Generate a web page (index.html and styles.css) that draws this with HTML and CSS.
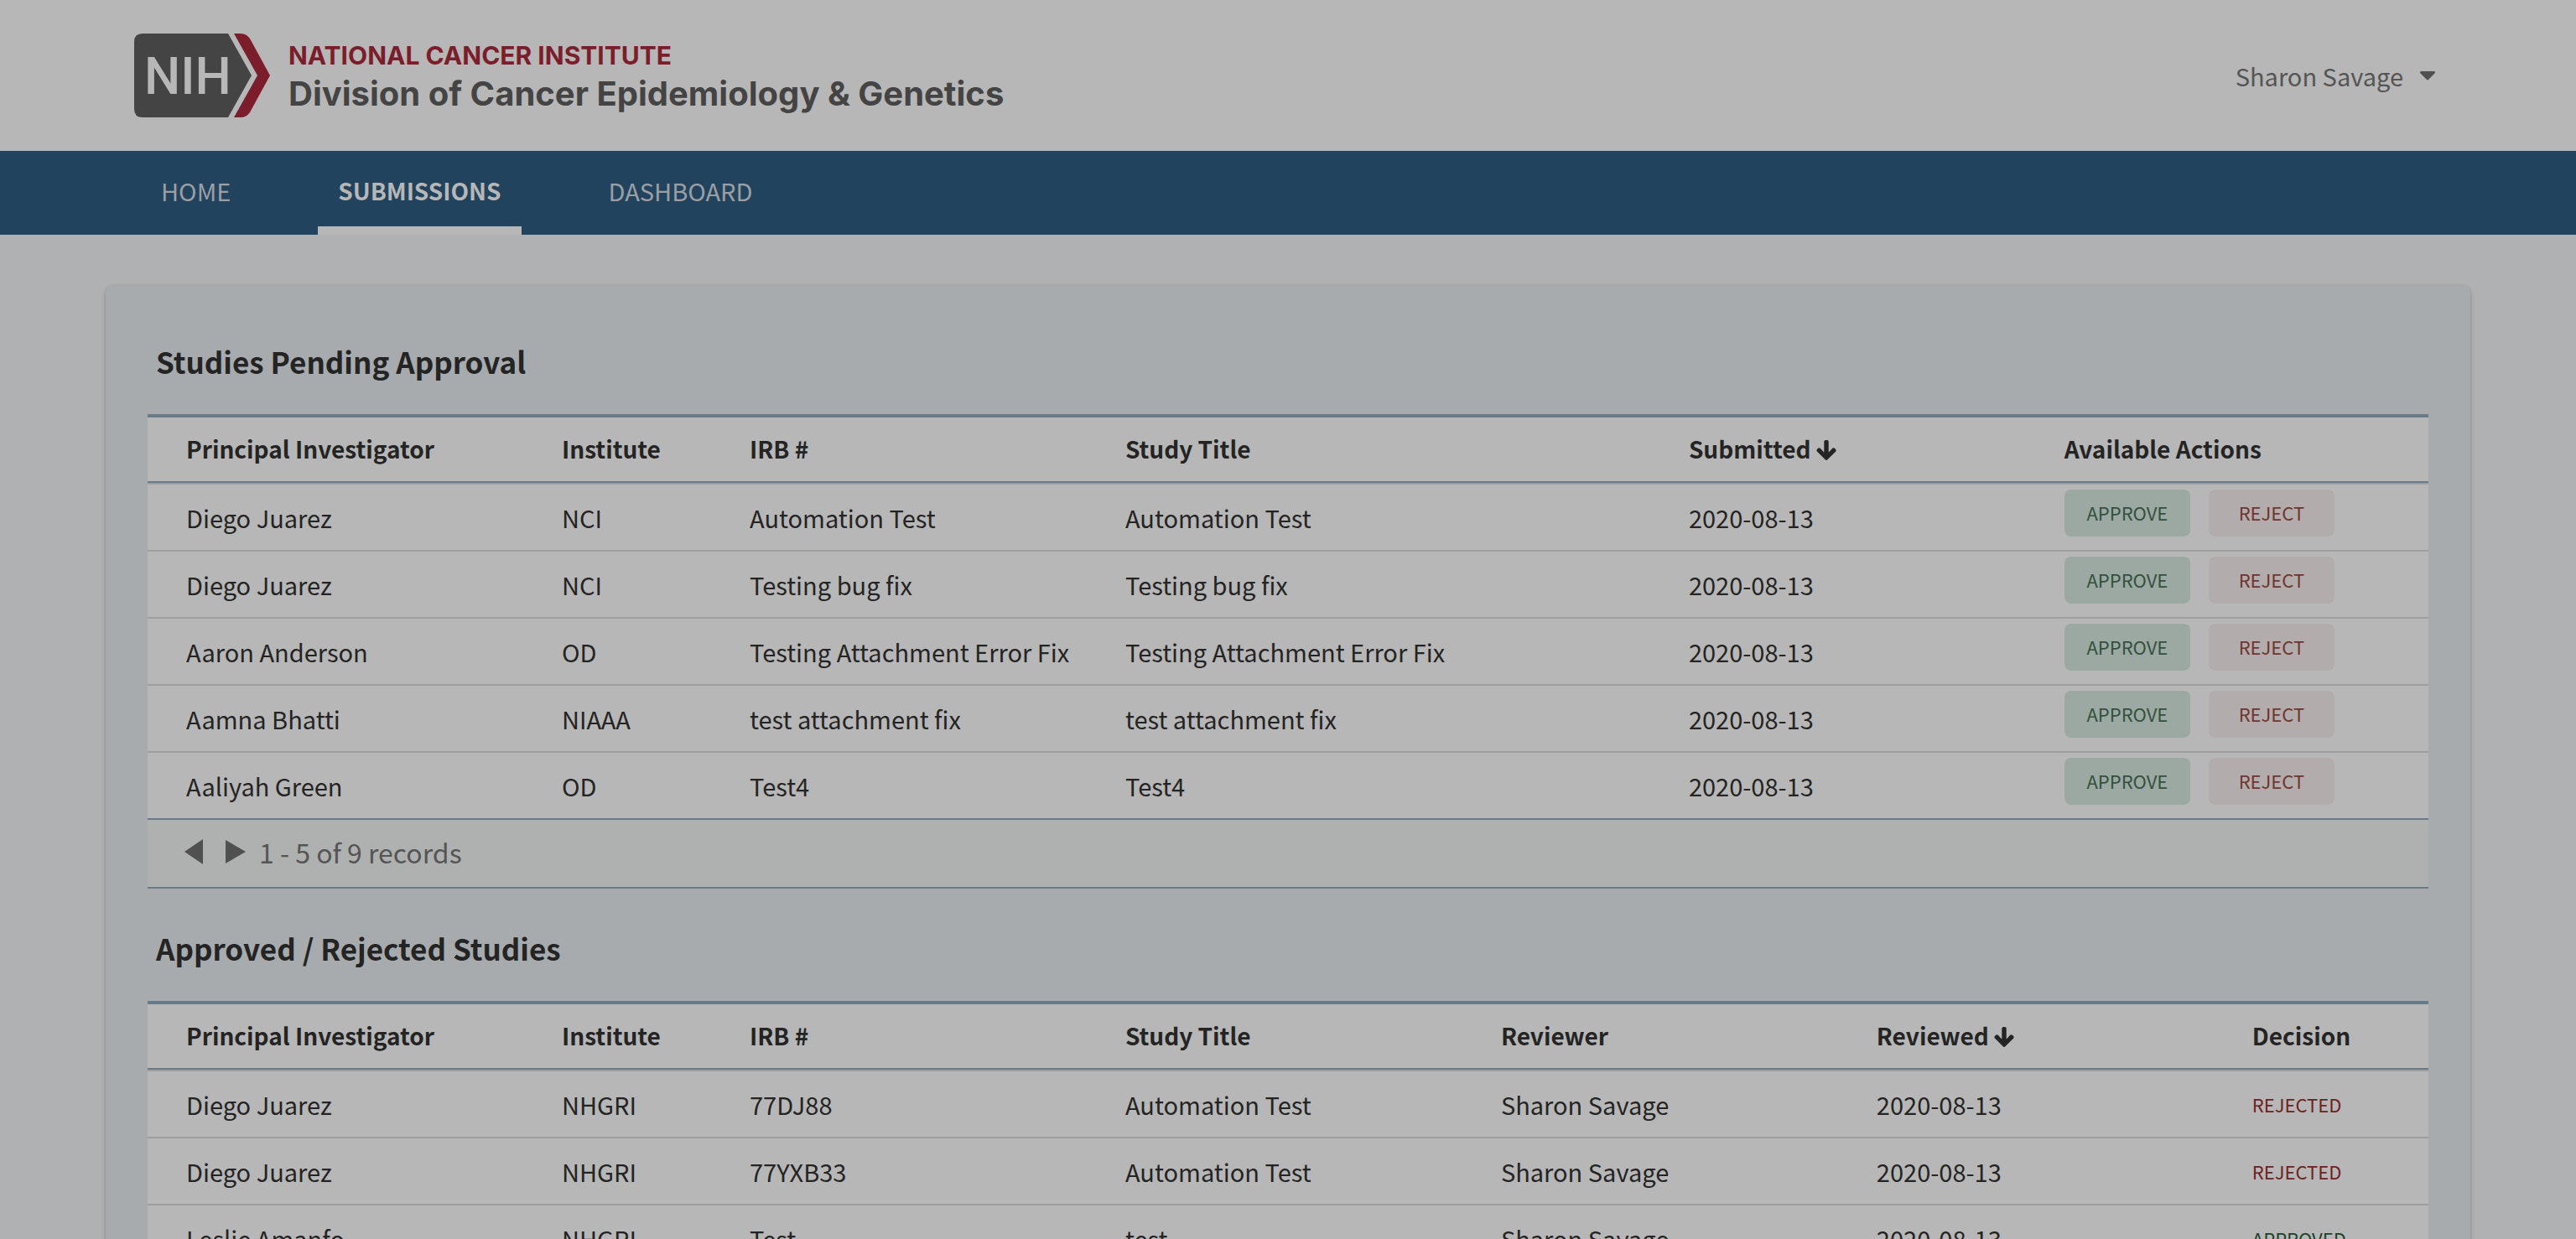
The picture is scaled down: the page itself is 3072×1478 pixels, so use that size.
FILE: index.html
```html
<!DOCTYPE html>
<html lang="en">
<head>
<meta charset="utf-8">
<title>Submissions</title>
<link rel="stylesheet" href="styles.css">
</head>
<body>
<svg class="sprite" aria-hidden="true">
  <symbol id="arrow-down" viewBox="-16 16 480 480"><path stroke="currentColor" stroke-width="28" stroke-linejoin="round" d="M413.100 222.500l22.200 22.200c9.400 9.400 9.400 24.600 0 33.900L241 473c-9.400 9.400-24.600 9.400-33.900 0L12.700 278.600c-9.400-9.400-9.400-24.600 0-33.900l22.200-22.200c9.500-9.500 25-9.300 34.300.4L184 343.400V56c0-13.300 10.700-24 24-24h32c13.300 0 24 10.700 24 24v287.400l114.800-120.500c9.300-9.800 24.800-10 34.300-.4z"/></symbol>
</svg>
<header class="header">
  <a class="brand" href="#">
    <svg class="brand-mark" viewBox="0 0 162 100" role="img" aria-label="NIH">
      <path class="mark-body" d="M10 0H112L140 50L112 100H10Q0 100 0 90V10Q0 0 10 0Z"/>
      <path class="mark-chevron" d="M119 0H127Q134 0 138 6L162 50L138 94Q134 100 127 100H119L147 50Z"/>
      <text class="mark-text" x="12" y="72">NIH</text>
    </svg>
    <span class="brand-text">
      <span class="brand-org">NATIONAL CANCER INSTITUTE</span>
      <span class="brand-division">Division of Cancer Epidemiology &amp; Genetics</span>
    </span>
  </a>
  <button class="user" type="button">Sharon Savage
    <svg class="caret" viewBox="0 0 18 11" aria-hidden="true"><path d="M1 0H17Q19 1 17 3L10 10Q9 11 8 10L1 3Q-1 1 1 0Z"/></svg>
  </button>
</header>
<nav class="nav">
  <a class="nav-link" href="#">HOME</a>
  <a class="nav-link nav-link-active" href="#" aria-current="page">SUBMISSIONS</a>
  <a class="nav-link" href="#">DASHBOARD</a>
</nav>
<main class="card">
  <section class="section">
    <h2 class="section-title">Studies Pending Approval</h2>
    <table class="table">
      <colgroup><col class="col-2"><col class="col-1"><col class="col-2"><col class="col-3"><col class="col-2"><col></colgroup>
      <thead>
        <tr><th>Principal Investigator</th><th>Institute</th><th>IRB #</th><th>Study Title</th><th>Submitted <svg class="sort"><use href="#arrow-down"/></svg></th><th>Available Actions</th></tr>
      </thead>
      <tbody>
        <tr><td>Diego Juarez</td><td>NCI</td><td>Automation Test</td><td>Automation Test</td><td>2020-08-13</td><td class="actions"><div class="action-group"><button class="btn btn-approve" type="button">APPROVE</button><button class="btn btn-reject" type="button">REJECT</button></div></td></tr>
        <tr><td>Diego Juarez</td><td>NCI</td><td>Testing bug fix</td><td>Testing bug fix</td><td>2020-08-13</td><td class="actions"><div class="action-group"><button class="btn btn-approve" type="button">APPROVE</button><button class="btn btn-reject" type="button">REJECT</button></div></td></tr>
        <tr><td>Aaron Anderson</td><td>OD</td><td>Testing Attachment Error Fix</td><td>Testing Attachment Error Fix</td><td>2020-08-13</td><td class="actions"><div class="action-group"><button class="btn btn-approve" type="button">APPROVE</button><button class="btn btn-reject" type="button">REJECT</button></div></td></tr>
        <tr><td>Aamna Bhatti</td><td>NIAAA</td><td>test attachment fix</td><td>test attachment fix</td><td>2020-08-13</td><td class="actions"><div class="action-group"><button class="btn btn-approve" type="button">APPROVE</button><button class="btn btn-reject" type="button">REJECT</button></div></td></tr>
        <tr><td>Aaliyah Green</td><td>OD</td><td>Test4</td><td>Test4</td><td>2020-08-13</td><td class="actions"><div class="action-group"><button class="btn btn-approve" type="button">APPROVE</button><button class="btn btn-reject" type="button">REJECT</button></div></td></tr>
      </tbody>
    </table>
    <div class="pager">
      <button class="pager-btn" type="button" aria-label="Previous page"><svg class="pager-icon" viewBox="0 0 24 30"><path d="M23 0V30L1 15Z"/></svg></button>
      <button class="pager-btn" type="button" aria-label="Next page"><svg class="pager-icon" viewBox="0 0 24 30"><path d="M0 1V29L24 15Z"/></svg></button>
      <span class="pager-text">1 - 5 of 9 records</span>
    </div>
  </section>
  <section class="section">
    <h2 class="section-title">Approved / Rejected Studies</h2>
    <table class="table">
      <colgroup><col class="col-2"><col class="col-1"><col class="col-2"><col class="col-2"><col class="col-2"><col class="col-2"><col></colgroup>
      <thead>
        <tr><th>Principal Investigator</th><th>Institute</th><th>IRB #</th><th>Study Title</th><th>Reviewer</th><th>Reviewed <svg class="sort"><use href="#arrow-down"/></svg></th><th>Decision</th></tr>
      </thead>
      <tbody>
        <tr><td>Diego Juarez</td><td>NHGRI</td><td>77DJ88</td><td>Automation Test</td><td>Sharon Savage</td><td>2020-08-13</td><td class="decision rejected">REJECTED</td></tr>
        <tr><td>Diego Juarez</td><td>NHGRI</td><td>77YXB33</td><td>Automation Test</td><td>Sharon Savage</td><td>2020-08-13</td><td class="decision rejected">REJECTED</td></tr>
        <tr><td>Leslie Amanfo</td><td>NHGRI</td><td>Test</td><td>test</td><td>Sharon Savage</td><td>2020-08-13</td><td class="decision approved">APPROVED</td></tr>
      </tbody>
    </table>
  </section>
</main>
</body>
</html>
```
FILE: styles.css
```css
* { box-sizing: border-box; }

body {
  margin: 0;
  background: #b0b1b3;
  color: #242424;
  font-family: "Noto Sans CJK JP", "Noto Sans", sans-serif;
  font-size: 29px;
  line-height: 40px;
}

a { color: inherit; text-decoration: none; }

button {
  border: 0;
  padding: 0;
  background: none;
  color: inherit;
  font: inherit;
}

.sprite { display: none; }

.header {
  display: flex;
  justify-content: space-between;
  align-items: center;
  height: 180px;
  padding: 0 168px 0 160px;
  background: #b7b7b7;
}

.brand { display: flex; align-items: center; gap: 22px; }
.brand-mark { width: 162px; height: 100px; }
.mark-body { fill: #444; }
.mark-chevron { fill: #7c1d2c; }
.mark-text { fill: #b7b7b7; font: 500 61px Roboto, sans-serif; }

.brand-text {
  display: flex;
  flex-direction: column;
  font-family: Inter, sans-serif;
  font-weight: 700;
  white-space: nowrap;
}
.brand-org { color: #7c1d2c; font-size: 30px; line-height: 44px; }
.brand-division { color: #444; font-size: 40px; line-height: 48px; }

.user {
  display: flex;
  align-items: center;
  gap: 20px;
  color: #555;
}
.caret { width: 18px; height: 11px; fill: #505050; }

.nav {
  display: flex;
  gap: 80px;
  height: 100px;
  padding: 0 168px;
  background: #22435e;
}
.nav-link {
  display: flex;
  align-items: center;
  padding: 4px 24px 0;
  border-bottom: 10px solid transparent;
  color: #9b9fa4;
}
.nav-link-active {
  border-color: #b7b7b7;
  color: #b7b7b7;
  font-size: 28px;
  font-weight: 600;
}

.card {
  margin: 60px 126px;
  padding: 50px;
  border-radius: 10px;
  background: #a7abae;
  box-shadow: 0 2px 4px rgba(0, 0, 0, 0.3);
}

.section + .section { margin-top: 30px; }
.section-title {
  margin: 0;
  padding: 12px 10px 34px;
  font-size: 35px;
  font-weight: 600;
  line-height: 58px;
}

.table {
  width: 100%;
  border-top: 4px solid #6a7a86;
  border-spacing: 0;
  table-layout: fixed;
  background: #b7b7b7;
}
.col-1 { width: 8.235%; }
.col-2 { width: 16.47%; }
.col-3 { width: 24.705%; }

.table th,
.table td {
  height: 80px;
  padding: 0 0 0 46px;
  border-bottom: 2px solid #9e9e9e;
  text-align: left;
  white-space: nowrap;
}
.table th {
  padding-bottom: 4px;
  font-size: 28px;
  font-weight: 600;
  box-shadow: inset 0 -2px #6a7a86;
}
.table tbody tr:last-child td { border-color: #6a7a86; }
.sort { width: 24px; height: 24px; vertical-align: -2px; fill: currentColor; }

.table .actions { padding-top: 6px; vertical-align: top; }
.action-group { display: flex; gap: 22px; }
.btn {
  width: 150px;
  height: 56px;
  border-radius: 8px;
  font-size: 22px;
  line-height: 54px;
  padding-bottom: 2px;
}
.btn-approve { background: #9ba9a2; color: #34513f; }
.btn-reject { background: #b2acac; color: #713531; }

.table .decision { font-size: 22px; }
.rejected { color: #6d2222; }
.approved { color: #1c4329; }

.pager {
  display: flex;
  align-items: center;
  height: 82px;
  padding: 0 0 4px 43px;
  border-bottom: 2px solid #6a7a86;
  background: #afb1b0;
  color: #555;
  font-size: 32px;
}
.pager-btn { display: flex; padding-right: 26px; }
.pager-btn + .pager-btn { padding-right: 16px; }
.pager-icon { width: 24px; height: 30px; fill: #505050; }
```
